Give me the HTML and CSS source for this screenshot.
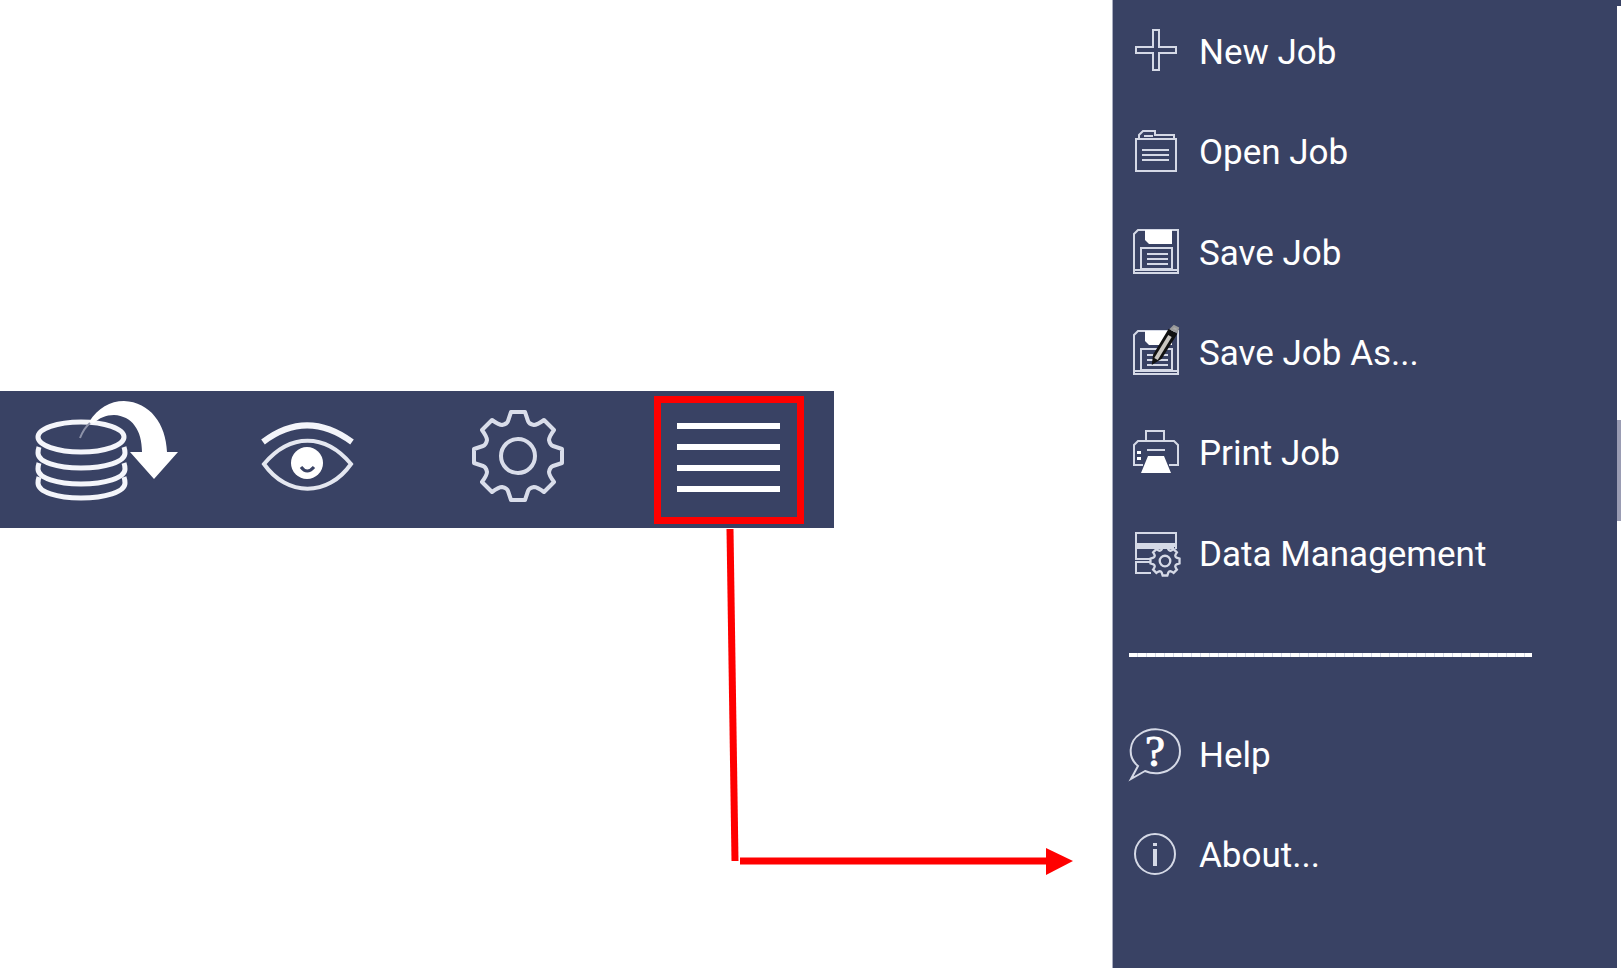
FILE: index.html
```html
<!DOCTYPE html>
<html lang="en">
<head>
<meta charset="UTF-8">
<meta name="viewport" content="width=device-width, initial-scale=1.0">
<title>Job Menu</title>
<link rel="stylesheet" href="styles.css">
</head>

<body>
<main class="workspace">
    <div class="toolbar">
        <button class="tool" type="button" aria-label="Import data">
            <svg width="144" height="128" viewBox="0 0 144 128" fill="none" stroke="#f4f5fa" stroke-width="5">
                <ellipse cx="45" cy="41" rx="43" ry="15"/>
                <path d="M3 51 Q2 54 2 57 C2 66 21 72 45 72 S89 66 89 57 Q89 54 88 51"/>
                <path d="M3 67 Q2 70 2 73 C2 82 21 88 45 88 S89 82 89 73 Q89 70 88 67"/>
                <path d="M3 81 Q2 84 2 87 C2 96 21 102 45 102 S89 96 89 87 Q89 84 88 81"/>
                <path d="M53 26 C62 12 74 5 88 5 C114 6 130 28 131 56 H142 L118 83 L94 56 H106 C106 34 96 20 78 19 C70 19 63 22 58 27Z" fill="#fff" stroke="none"/>
                <path d="M54 27 Q48 32 44 42" stroke="#8d92a9" stroke-width="2"/>
            </svg>
        </button>
        <button class="tool" type="button" aria-label="View">
            <svg width="92" height="128" viewBox="0 0 92 128" fill="none" stroke="#e4e7f0" stroke-width="4">
                <path d="M1 46 C30 24 60 24 90 46" stroke="#f4f5fa" stroke-width="6"/>
                <path d="M2 68 C28 37 63 37 89 68 C66 101 25 101 2 68Z"/>
                <circle cx="45" cy="67" r="16" fill="#fff" stroke="none"/>
                <path d="M39 71 Q45 79 52 71" stroke="#394264" stroke-width="3"/>
            </svg>
        </button>
        <button class="tool" type="button" aria-label="Settings">
            <svg width="92" height="128" viewBox="0 0 92 128" fill="none" stroke="#d9ddea" stroke-width="4" stroke-linejoin="round">
                <g transform="translate(45 60)">
                    <path id="gear" d="M-7 -44 H7 L10 -35 Q11 -32 16 -31 Q19 -31 26 -36 L36 -26 Q31 -19 31 -16 Q32 -11 35 -10 L44 -7 V7 L35 10 Q32 11 31 16 Q31 19 36 26 L26 36 Q19 31 16 31 Q11 32 10 35 L7 44 H-7 L-10 35 Q-11 32 -16 31 Q-19 31 -26 36 L-36 26 Q-31 19 -31 16 Q-32 11 -35 10 L-44 7 V-7 L-35 -10 Q-32 -11 -31 -16 Q-31 -19 -36 -26 L-26 -36 Q-19 -31 -16 -31 Q-11 -32 -10 -35Z"/>
                    <circle r="17"/>
                </g>
            </svg>
        </button>
        <button class="tool tool-active" type="button" aria-label="Menu">
            <svg width="136" height="114" viewBox="0 0 136 114" stroke="#fff" stroke-width="6">
                <path d="M16 23 H119 M16 44 H119 M16 65 H119 M16 86 H119"/>
            </svg>
        </button>
    </div>
    <svg class="connector" width="346" height="348" viewBox="0 0 346 348" fill="none" stroke="#f00" stroke-width="7">
        <path d="M2 1 L7 333"/>
        <path d="M12 333 H320"/>
        <path d="M318 320 L345 333 L318 347Z" fill="#f00" stroke="none"/>
    </svg>
</main>

<aside class="sidebar">
    <nav class="menu">
        <a class="item" href="#new">
            <svg class="icon" viewBox="0 0 52 52">
                <path d="M23 4 H29 V21 H46 V27 H29 V44 H23 V27 H6 V21 H23Z"/>
            </svg>
            New Job
        </a>
        <a class="item" href="#open">
            <svg class="icon" viewBox="0 0 52 52">
                <path d="M6 12 H46 V44 H6Z M9 12 V8 L13 4 H25 V8 H44 V12 M14 9 H23"/>
                <path d="M12 23 H39 M12 28 H39 M12 33 H39"/>
            </svg>
            Open Job
        </a>
        <a class="item" href="#save">
            <svg class="icon" viewBox="0 0 52 52">
                <g id="floppy">
                    <path d="M8 3 H48 V46 H4 V7Z M4 43 H48"/>
                    <path d="M15 3 H42 V17 H19 L15 13Z" fill="#fff" stroke="none"/>
                    <path d="M11 21 H42 V42 H11Z M17 27 H38 M17 32 H38 M17 37 H38"/>
                </g>
            </svg>
            Save Job
        </a>
        <a class="item" href="#save-as">
            <svg class="icon" viewBox="0 0 52 52">
                <use href="#floppy"/>
                <path d="M23 35 L24 27 L39 2 L46 6 L31 30Z" fill="#111" stroke="#111" stroke-width="2"/>
                <path d="M26 31 L40 8" stroke="#c9c6c0" stroke-width="4"/>
                <path d="M41 1 L44 -2 L48 0 L47 4Z" fill="#aaa" stroke="#999"/>
            </svg>
            Save Job As...
        </a>
        <a class="item" href="#print">
            <svg class="icon" viewBox="0 0 52 52">
                <path d="M16 13 V3 H34 V13"/>
                <path d="M13 37 H4 V17 L8 13 H44 L48 17 V37 H39"/>
                <path d="M17 22 H35"/>
                <path d="M7 23 H11 V26 H7Z M7 29 H11 V32 H7Z M18 28 H34 L41 45 H11Z" fill="#fff" stroke="none"/>
            </svg>
            Print Job
        </a>
        <a class="item" href="#data">
            <svg class="icon" viewBox="0 0 52 52">
                <path d="M6 5 H46 V16 H6Z M46 21 V18 H6 V31 H20 M6 20 H44 M21 34 H6 V45 H21"/>
                <g transform="translate(35 33) scale(.33)" stroke-width="7">
                    <use href="#gear"/>
                    <circle r="16"/>
                </g>
            </svg>
            Data Management
        </a>
        <hr class="divider">
        <a class="item" href="#help">
            <svg class="icon" viewBox="0 0 52 52">
                <path d="M8 37 C-3 28 -1 12 10 5 C20 -2 35 -1 44 7 C52 15 52 29 44 37 C36 45 24 46 15 42 L1 50Z"/>
                <text class="question" x="25" y="37" text-anchor="middle">?</text>
            </svg>
            Help
        </a>
        <a class="item" href="#about">
            <svg class="icon" viewBox="0 0 52 52">
                <circle cx="25" cy="24" r="20"/>
                <path d="M25 19 V36 M25 13 V16" stroke-width="4"/>
            </svg>
            About...
        </a>
    </nav>
    <div class="scroll-track">
        <div class="scroll-thumb"></div>
    </div>
</aside>
</body>
</html>
```
FILE: styles.css
```css
body {
    margin: 0;
    min-height: 100vh;
    display: grid;
    grid-template-columns: 1112fr 509fr;
    background-color: white;
    font-family: Roboto, Arial, sans-serif;
}
.workspace {
    display: flex;
    flex-direction: column;
    padding-top: 391px;
}
.toolbar {
    box-sizing: border-box;
    display: grid;
    grid-template-columns: 200fr 200fr 222fr 198fr;
    justify-items: center;
    width: 75%;
    padding: 5px 6px 4px 8px;
    background-color: #394264;
}
.tool {
    padding: 0;
    border: none;
    background: none;
    cursor: pointer;
}
.tool svg {
    display: block;
    overflow: visible;
}
.tool-active {
    border: 7px solid #f00;
}
.connector {
    align-self: flex-end;
    margin-right: 38px;
    overflow: visible;
}
.sidebar {
    display: flex;
    border-left: 1px solid #a9adc0;
    background-color: #394264;
}
.menu {
    flex: 1;
    display: grid;
    grid-auto-rows: 1fr;
    padding: 2px 0 62px;
}
.item {
    display: flex;
    align-items: center;
    gap: 17px;
    padding-left: 17px;
    color: white;
    font-size: 35px;
    text-decoration: none;
}
.icon {
    width: 52px;
    height: 52px;
    overflow: visible;
    fill: none;
    stroke: #d5d9e6;
    stroke-width: 2;
}
.question {
    fill: white;
    stroke: white;
    stroke-width: 1;
    font-family: "Liberation Serif", serif;
    font-size: 45px;
}
.divider {
    align-self: center;
    width: 80%;
    height: 4px;
    margin: 0 0 0 16px;
    border: none;
    background: repeating-linear-gradient(to right, white 0 8px, #d5d9e6 8px 9px);
}
.scroll-track {
    width: 4px;
    margin-top: 6px;
    background-color: white;
}
.scroll-thumb {
    height: 101px;
    margin-top: 414px;
    background-color: #9a9cb3;
}
```
